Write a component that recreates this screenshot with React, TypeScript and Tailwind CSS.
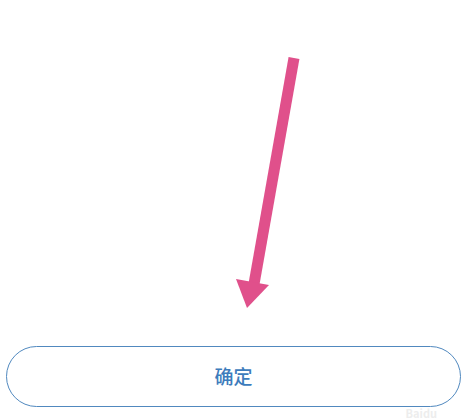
export default function App() {
  return (
    <div className="relative h-[420px] w-[467px] overflow-hidden bg-white font-['Noto_Sans_CJK_SC',sans-serif]">
      {/* pointer arrow */}
      <svg width="467" height="346" viewBox="0 0 467 346" className="block">
        <line x1="294" y1="58" x2="254" y2="284" stroke="#e0508b" strokeWidth="11" />
        <polygon points="236,279 269,285 247,308" fill="#e0508b" />
      </svg>

      <div className="px-[6px]">
        <button className="flex h-[61px] w-full items-center justify-center rounded-full border-[1.5px] border-[#5189bf] bg-white text-[19px] font-medium text-[#3d7cbc]">
          确定
        </button>
      </div>

      <span className="absolute right-[30px] bottom-0 text-[11px] leading-[13px] font-bold text-[#ededed]">Baidu</span>
    </div>
  );
}
